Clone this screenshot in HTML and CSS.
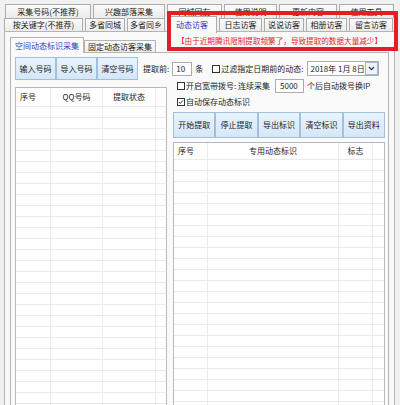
FILE: index.html
```html
<!DOCTYPE html>
<html lang="zh-CN">
<head>
<meta charset="utf-8">
<title>动态访客</title>
<link rel="stylesheet" href="styles.css">
</head>
<body>
<div class="win">
  <div class="tabrow r1">
    <div class="tab w86">采集号码(不推荐)</div>
    <div class="tab w72">兴趣部落采集</div>
    <div class="tab w55">同城网友</div>
    <div class="tab w53">使用说明</div>
    <div class="tab w58">更新内容</div>
    <div class="tab w55">使用工具</div>
  </div>
  <div class="tabrow r2">
    <div class="tab w79">按关键字(不推荐)</div>
    <div class="tab w40">多省同城</div>
    <div class="tab w38">多省同乡</div>
    <div class="tab w50 sel">动态访客</div>
    <div class="tab w43">日志访客</div>
    <div class="tab w40">说说访客</div>
    <div class="tab w41">相册访客</div>
    <div class="tab w44">留言访客</div>
  </div>
  <div class="page">
    <div class="itabrow">
      <div class="itab sel">空间动态标识采集</div>
      <div class="itab">固定动态访客采集</div>
      <div class="notice">【由于近期腾讯限制提取频繁了，导致提取的数据大量减少】</div>
    </div>
    <div class="ipage">
      <div class="toprow">
        <div class="btns">
          <div class="btn">输入号码</div>
          <div class="btn">导入号码</div>
          <div class="btn">清空号码</div>
        </div>
        <span class="lbl">提取前:</span>
        <div class="field num">10</div>
        <span class="unit">条</span>
        <div class="chk filter"><span class="box"></span><span>过滤指定日期前的动态:</span></div>
        <div class="date">
          <span class="dtext">2018年 1月 8日</span>
          <span class="dd"><svg width="7" height="5" viewBox="0 0 7 5"><path d="M1 1 L3.5 3.6 L6 1" stroke="#333" stroke-width="1.2" fill="none"/></svg></span>
        </div>
      </div>
      <div class="main">
        <div class="list llist">
          <div class="lhead">
            <div class="c c1 left">序号</div>
            <div class="c c2">QQ号码</div>
            <div class="c c3">提取状态</div>
            <div class="c c4"></div>
          </div>
          <div class="lbody">
            <div class="c c1"></div>
            <div class="c c2"></div>
            <div class="c c3"></div>
            <div class="c c4"></div>
          </div>
        </div>
        <div class="rcol">
          <div class="rrow r-dial">
            <div class="chk"><span class="box"></span><span>开启宽带拨号: 连续采集</span></div>
            <div class="field cnt">5000</div>
            <span class="after">个后自动拨号换IP</span>
          </div>
          <div class="rrow r-save">
            <div class="chk"><span class="box checked"><svg width="8" height="8" viewBox="0 0 8 8"><path d="M1.3 4 L3.1 5.9 L6.6 1.8" stroke="#222" stroke-width="1.2" fill="none"/></svg></span><span>自动保存动态标识</span></div>
          </div>
          <div class="btns rbtns">
            <div class="btn">开始提取</div>
            <div class="btn">停止提取</div>
            <div class="btn">导出标识</div>
            <div class="btn">清空标识</div>
            <div class="btn">导出资料</div>
          </div>
          <div class="list rlist">
            <div class="lhead">
              <div class="c d1 left">序号</div>
              <div class="c d2">专用动态标识</div>
              <div class="c d3">标志</div>
              <div class="c d4"></div>
            </div>
            <div class="lbody">
              <div class="c d1"></div>
              <div class="c d2"></div>
              <div class="c d3"></div>
              <div class="c d4"></div>
            </div>
          </div>
        </div>
      </div>
    </div>
  </div>
  <div class="redbox"></div>
</div>
</body>
</html>
```
FILE: styles.css
```css
* { box-sizing: border-box; margin: 0; padding: 0; }
body {
  background: #f0f0f0;
  font-family: "Noto Sans CJK SC", "Noto Sans", sans-serif;
  font-size: 8px;
  line-height: 1;
  color: #1c1c1c;
}
.win {
  position: relative;
  width: 400px;
  height: 405px;
  overflow: hidden;
  background: #f0f0f0;
}

/* outer tabs */
.tabrow { display: flex; gap: 2px; }
.r1 { padding: 4px 0 0 5px; height: 18px; }
.r2 { padding-left: 4px; height: 13px; position: relative; z-index: 2; }
.tab {
  display: flex;
  align-items: center;
  justify-content: center;
  white-space: nowrap;
  border: 1px solid #acacac;
  border-bottom: none;
  background: linear-gradient(#fbfbfb, #ebebeb);
  flex: none;
}
.r1 .tab { height: 14px; }
.r2 .tab { height: 13px; }
.r2 .tab.sel {
  height: 17px;
  margin-top: -2px;
  background: #f9f9f9;
  color: #3434b4;
}
.w86 { width: 86px; } .w72 { width: 72px; } .w55 { width: 55px; }
.w53 { width: 53px; } .w58 { width: 58px; } .w79 { width: 79px; }
.w40 { width: 40px; } .w38 { width: 38px; } .w50 { width: 50px; }
.w43 { width: 43px; } .w41 { width: 41px; } .w44 { width: 44px; }

/* outer page */
.page {
  margin-left: 4px;
  width: 391px;
  height: 390px;
  border: 1px solid #b4b4b4;
  background: #f9f9f9;
  padding: 5px 0 0 5px;
}
.itabrow {
  display: flex;
  align-items: flex-end;
  height: 15px;
  position: relative;
  z-index: 2;
}
.itab {
  height: 12px;
  padding: 0 3px;
  display: flex;
  align-items: center;
  border: 1px solid #b4b4b4;
  border-bottom: none;
  background: linear-gradient(#fbfbfb, #ededed);
  white-space: nowrap;
}
.itab.sel {
  height: 16px;
  margin-bottom: -1px;
  padding: 0 4px;
  background: #fafafa;
  color: #2a44c4;
}
.notice {
  align-self: flex-start;
  margin-left: 21px;
  margin-top: 0;
  color: #e0262d;
  font-size: 7.6px;
  white-space: nowrap;
}

/* inner page */
.ipage {
  width: 379px;
  height: 370px;
  border: 1px solid #b4b4b4;
  background: #fafafa;
  padding: 4px 0 0 4px;
  display: flex;
  flex-direction: column;
}
.toprow {
  display: flex;
  align-items: center;
  height: 23px;
  white-space: nowrap;
}
.btns { display: flex; }
.btn {
  width: 41px;
  height: 23px;
  display: flex;
  align-items: center;
  justify-content: center;
  border: 1px solid #a3c0db;
  background: linear-gradient(#e9f3fc, #d5e7f7);
  white-space: nowrap;
}
.lbl { margin-left: 5px; }
.field {
  height: 14px;
  border: 1px solid #abadb3;
  background: #fff;
  display: flex;
  align-items: center;
}
.num { width: 20px; margin-left: 3px; padding-left: 3px; }
.unit { margin-left: 3px; }
.chk { display: flex; align-items: center; gap: 1px; }
.filter { margin-left: 9px; }
.box {
  width: 8px;
  height: 8px;
  border: 1px solid #333;
  background: #fff;
  display: flex;
  align-items: center;
  justify-content: center;
  flex: none;
}
.box svg { display: block; }
.date {
  margin-left: 4px;
  width: 72px;
  height: 15px;
  border: 1px solid #abadb3;
  background: #fff;
  display: flex;
  align-items: center;
  padding-left: 2px;
}
.dtext { flex: 1; }
.dd {
  width: 13px;
  height: 13px;
  border: 1px solid #9fb9d6;
  background: #edf4fb;
  display: flex;
  align-items: center;
  justify-content: center;
}

/* main area */
.main { display: flex; flex: 1; }
.list {
  border: 1px solid #b6bac0;
  background: #fff;
  display: flex;
  flex-direction: column;
}
.llist { width: 152px; margin-top: 7px; }
.lhead { display: flex; flex: none; }
.llist .lhead { height: 18px; }
.rlist .lhead { height: 16px; }
.lbody {
  display: flex;
  flex: 1;
  background: repeating-linear-gradient(to bottom, #ebebeb 0 1px, transparent 1px 11px);
}
.c {
  display: flex;
  align-items: center;
  justify-content: center;
  border-right: 1px solid #ebebeb;
  flex: none;
}
.c.left { justify-content: flex-start; padding-left: 4px; }
.c1 { width: 35px; } .c2 { width: 52px; } .c3 { width: 53px; }
.c4 { flex: 1; border-right: none; }
.d1 { width: 34px; } .d2 { width: 131px; } .d3 { width: 34px; }
.d4 { flex: 1; border-right: none; }

.rcol {
  width: 212px;
  margin-left: 6px;
  display: flex;
  flex-direction: column;
}
.rrow {
  display: flex;
  align-items: center;
  white-space: nowrap;
  padding-left: 4px;
}
.r-dial { height: 14px; margin-top: -1px; }
.cnt { width: 29px; margin-left: 5px; padding-left: 4px; }
.after { margin-left: 3px; }
.r-save { height: 13px; margin-top: 2px; }
.rbtns { margin-top: 4px; }
.rbtns .btn { flex: 1; width: auto; height: 26px; }
.rlist { margin-top: 4px; flex: 1; }

/* annotation overlay */
.redbox {
  position: absolute;
  left: 167px;
  top: 11px;
  width: 231px;
  height: 40px;
  border: 4px solid #e31e24;
  z-index: 5;
}
```
